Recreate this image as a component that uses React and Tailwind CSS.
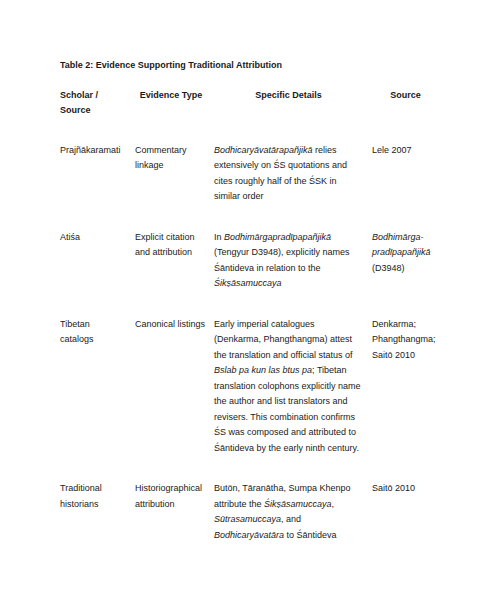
const rows = [
  {
    scholar: 'Prajñākaramati',
    type: 'Commentary linkage',
    details: (
      <>
        <i>Bodhicaryāvatārapañjikā</i> relies extensively on ŚS quotations and cites roughly half of the ŚSK in similar order
      </>
    ),
    source: 'Lele 2007',
  },
  {
    scholar: 'Atiśa',
    type: 'Explicit citation and attribution',
    details: (
      <>
        In <i>Bodhimārgapradīpapañjikā</i> (Tengyur D3948), explicitly names Śāntideva in relation to the <i>Śikṣāsamuccaya</i>
      </>
    ),
    source: (
      <>
        <i>Bodhimārga-pradīpapañjikā</i> (D3948)
      </>
    ),
  },
  {
    scholar: 'Tibetan catalogs',
    type: 'Canonical listings',
    details: (
      <>
        Early imperial catalogues (Denkarma, Phangthangma) attest the translation and official status of <i>Bslab pa kun las btus pa</i>; Tibetan translation colophons explicitly name the author and list translators and revisers. This combination confirms ŚS was composed and attributed to Śāntideva by the early ninth century.
      </>
    ),
    source: 'Denkarma; Phangthangma; Saitō 2010',
  },
  {
    scholar: 'Traditional historians',
    type: 'Historiographical attribution',
    details: (
      <>
        Butön, Tāranātha, Sumpa Khenpo attribute the <i>Śikṣāsamuccaya</i>, <i>Sūtrasamuccaya</i>, and <i>Bodhicaryāvatāra</i> to Śāntideva
      </>
    ),
    source: 'Saitō 2010',
  },
];

// column boxes: 60 | 135 | 214 | 372
const cols = 'grid grid-cols-[75px_79px_158px_67px]';

export default function App() {
  return (
    <div
      className="min-h-[599px] w-[503px] bg-white pl-[60px] pt-[58px] text-[9px] leading-[15.5px] text-[#1a1a1a]"
      style={{ fontFamily: '"Liberation Sans", Arial, sans-serif' }}
    >
      <div className="font-bold">Table 2: Evidence Supporting Traditional Attribution</div>

      <div className={cols + ' mt-[14px] font-bold'}>
        <div className="pr-[11px]">Scholar / Source</div>
        <div className="pr-[7px] text-center">Evidence Type</div>
        <div className="pr-[9px] text-center">Specific Details</div>
        <div className="text-center">Source</div>
      </div>

      <div className="mt-[24px] flex flex-col gap-y-[25px]">
        {rows.map(function (r, i) {
          return (
            <div key={i} className={cols}>
              <div className="pr-[11px]">{r.scholar}</div>
              <div className="pr-[5px]">{r.type}</div>
              <div className="pr-[9px]">{r.details}</div>
              <div>{r.source}</div>
            </div>
          );
        })}
      </div>
    </div>
  );
}
